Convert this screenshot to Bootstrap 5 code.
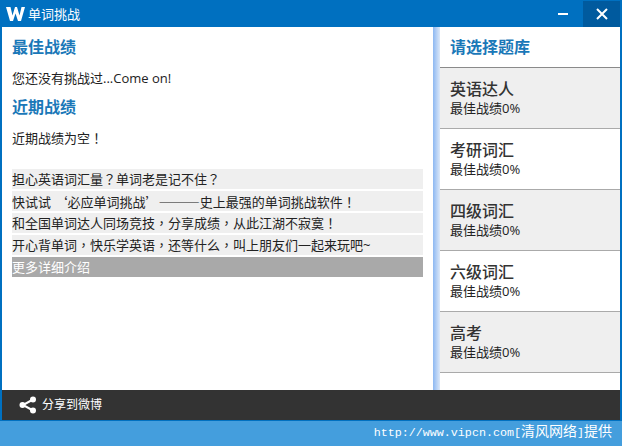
<!DOCTYPE html>
<html lang="zh-CN">
<head>
  <meta charset="UTF-8" />
  <title>单词挑战</title>
  <link href="https://cdn.jsdelivr.net/npm/bootstrap@5.3.3/dist/css/bootstrap.min.css" rel="stylesheet">
  <style>
    html, body { height: 446px; overflow: hidden; }
    body { background: #449edd; font-family: "Open Sans", "Noto Sans CJK SC", sans-serif; font-size: 13px; color: #222; }
    .app-window { height: 421px; border: 2px solid #0070c0; border-top-width: 1px; border-bottom-width: 1px; background: #fff; }
    .app-title { height: 26px; background: #0070c0; color: #fff; }
    .app-logo { width: 19px; height: 16px; margin-left: 4px; margin-right: 3px; }
    .app-name { font-size: 13px; line-height: 26px; }
    .win-btn { width: 40px; height: 26px; }
    .win-close { width: 37px; background: #005a9e; }
    .app-main { height: 363px; }
    .left-pane { width: 431px; padding: 9px 10px 0 10px; }
    .sec-title { font-size: 16px; font-weight: 700; color: #1a78b8; line-height: 22px; margin: 0; }
    .sec-text { line-height: 18px; margin: 11px 0 9px; }
    .intro-list { margin-top: 22px; width: 411px; }
    .intro-row { height: 20px; line-height: 20px; background: #efefef; margin-bottom: 2px; white-space: nowrap; }
    .intro-more { background: #a9a9a9; color: #fff; }
    .wide-punc { font-family: "Noto Sans CJK TC", sans-serif; }
    .cjk-quote { font-family: "Noto Sans CJK SC", sans-serif; }
    .long-dash { font-size: 13.8px; }
    .side-strip { width: 7px; background: linear-gradient(90deg, #8db8f2, #dce8f8); }
    .right-pane { width: 180px; }
    .bank-head { height: 41px; border-bottom: 1px solid #8a8a8a; padding-left: 10px; font-size: 16px; font-weight: 700; color: #1a78b8; line-height: 41px; }
    .bank-item { height: 61px; border-bottom: 1px solid #aaa; padding: 9px 0 0 10px; }
    .bank-shade { background: #efefef; }
    .bank-name { font-size: 16px; font-weight: 500; line-height: 24px; color: #333; }
    .bank-score { line-height: 15px; }
    .app-foot { height: 30px; background: #333; color: #fff; font-size: 12px; padding-left: 16px; }
    .share-ico { width: 20px; height: 20px; margin-right: 4px; }
    .credit { height: 25px; color: #fff; padding-right: 10px; font-size: 14px; line-height: 20px; }
    .credit-url { font-family: "Liberation Mono", monospace; font-size: 11.7px; }
  </style>
</head>
<body>
  <div class="app-window d-flex flex-column">
    <div class="app-title d-flex align-items-center">
      <svg class="app-logo" viewBox="0 0 19 16"><path d="M0 1h4.500l2 8.500L9 1h2l2.500 8.500 2-8.500H19l-4 14h-3L9.500 7.500 7 15H4z" fill="#fff"/></svg>
      <span class="app-name flex-grow-1">单词挑战</span>
      <div class="win-btn d-flex align-items-center justify-content-center">
        <svg width="12" height="12" viewBox="0 0 12 12"><rect x="1" y="5" width="10" height="2" fill="#fff"/></svg>
      </div>
      <div class="win-btn win-close d-flex align-items-center justify-content-center">
        <svg width="14" height="14" viewBox="0 0 14 14"><path d="M2 2l10 10M12 2L2 12" stroke="#fff" stroke-width="2"/></svg>
      </div>
    </div>
    <div class="app-main d-flex">
      <div class="left-pane">
        <h2 class="sec-title">最佳战绩</h2>
        <p class="sec-text">您还没有挑战过...Come on!</p>
        <h2 class="sec-title">近期战绩</h2>
        <p class="sec-text">近期战绩为空<span class="wide-punc" lang="zh-TW">！</span></p>
        <div class="intro-list">
          <div class="intro-row">担心英语词汇量<span class="wide-punc" lang="zh-TW">？</span>单词老是记不住<span class="wide-punc" lang="zh-TW">？</span></div>
          <div class="intro-row">快试试 <span class="cjk-quote">‘必应单词挑战’<span class="long-dash">———</span></span>史上最强的单词挑战软件<span class="wide-punc" lang="zh-TW">！</span></div>
          <div class="intro-row">和全国单词达人同场竞技<span class="wide-punc" lang="zh-TW">，</span>分享成绩<span class="wide-punc" lang="zh-TW">，</span>从此江湖不寂寞<span class="wide-punc" lang="zh-TW">！</span></div>
          <div class="intro-row">开心背单词<span class="wide-punc" lang="zh-TW">，</span>快乐学英语<span class="wide-punc" lang="zh-TW">，</span>还等什么<span class="wide-punc" lang="zh-TW">，</span>叫上朋友们一起来玩吧~</div>
          <div class="intro-row intro-more">更多详细介绍</div>
        </div>
      </div>
      <div class="side-strip"></div>
      <div class="right-pane">
        <div class="bank-head">请选择题库</div>
        <div class="bank-item bank-shade"><div class="bank-name">英语达人</div><div class="bank-score">最佳战绩0%</div></div>
        <div class="bank-item"><div class="bank-name">考研词汇</div><div class="bank-score">最佳战绩0%</div></div>
        <div class="bank-item bank-shade"><div class="bank-name">四级词汇</div><div class="bank-score">最佳战绩0%</div></div>
        <div class="bank-item"><div class="bank-name">六级词汇</div><div class="bank-score">最佳战绩0%</div></div>
        <div class="bank-item bank-shade"><div class="bank-name">高考</div><div class="bank-score">最佳战绩0%</div></div>
      </div>
    </div>
    <div class="app-foot d-flex align-items-center">
      <svg class="share-ico" viewBox="0 0 20 20"><path d="M15 4.500L5 10l10 5.500" stroke="#fff" stroke-width="2" fill="none"/><circle cx="15" cy="4.500" r="3" fill="#fff"/><circle cx="4.500" cy="10" r="3" fill="#fff"/><circle cx="15" cy="15.500" r="3" fill="#fff"/></svg>
      <span>分享到微博</span>
    </div>
  </div>
  <div class="credit text-end"><span class="credit-url">http://www.vipcn.com[</span>清风网络<span class="credit-url">]</span>提供</div>
  <script src="https://cdn.jsdelivr.net/npm/bootstrap@5.3.3/dist/js/bootstrap.bundle.min.js"></script>
</body>
</html>
